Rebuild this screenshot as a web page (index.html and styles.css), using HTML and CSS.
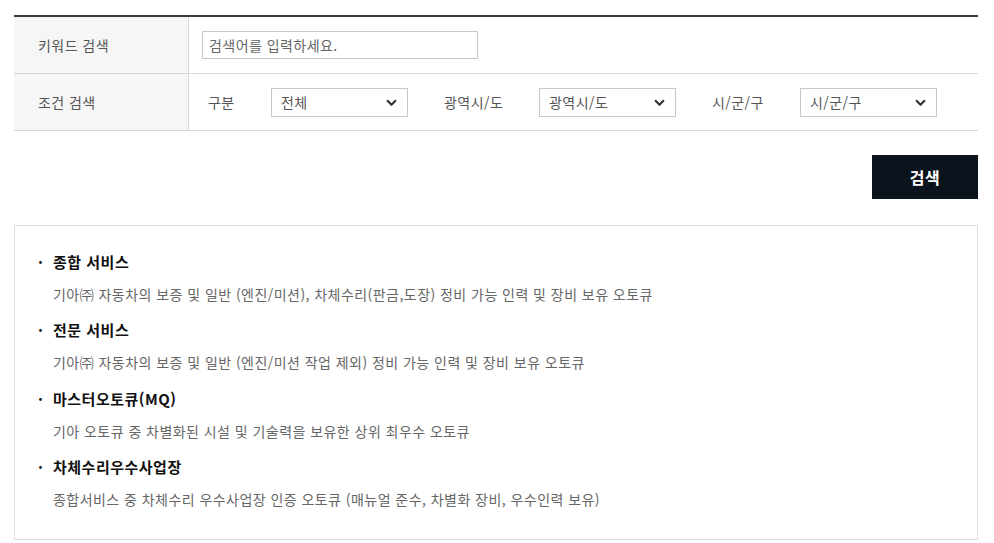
FILE: index.html
```html
<!DOCTYPE html>
<html lang="ko">
<head>
  <meta charset="UTF-8">
  <meta name="viewport" content="width=device-width, initial-scale=1.0">
  <title>오토큐 검색</title>
  <link rel="stylesheet" href="styles.css">
</head>
<body>
  <!-- Search form -->
  <div class="search-table">
    <div class="row">
      <div class="label">키워드 검색</div>
      <div class="field">
        <input type="text" class="keyword" placeholder="검색어를 입력하세요.">
      </div>
    </div>
    <div class="row">
      <div class="label">조건 검색</div>
      <div class="field conditions">
        <span class="cond-label">구분</span>
        <div class="select"><span>전체</span><svg viewBox="0 0 10 6"><path d="M1 1l4 4 4-4" /></svg></div>
        <span class="cond-label sido">광역시/도</span>
        <div class="select"><span>광역시/도</span><svg viewBox="0 0 10 6"><path d="M1 1l4 4 4-4" /></svg></div>
        <span class="cond-label sigungu">시/군/구</span>
        <div class="select"><span>시/군/구</span><svg viewBox="0 0 10 6"><path d="M1 1l4 4 4-4" /></svg></div>
      </div>
    </div>
  </div>

  <div class="actions">
    <button class="btn-search">검색</button>
  </div>

  <!-- Service descriptions -->
  <div class="info-box">
    <dl>
      <dt>종합 서비스</dt>
      <dd>기아㈜ 자동차의 보증 및 일반 (엔진/미션), 차체수리(판금,도장) 정비 가능 인력 및 장비 보유 오토큐</dd>
      <dt>전문 서비스</dt>
      <dd>기아㈜ 자동차의 보증 및 일반 (엔진/미션 작업 제외) 정비 가능 인력 및 장비 보유 오토큐</dd>
      <dt>마스터오토큐(MQ)</dt>
      <dd>기아 오토큐 중 차별화된 시설 및 기술력을 보유한 상위 최우수 오토큐</dd>
      <dt>차체수리우수사업장</dt>
      <dd>종합서비스 중 차체수리 우수사업장 인증 오토큐 (매뉴얼 준수, 차별화 장비, 우수인력 보유)</dd>
    </dl>
  </div>
</body>
</html>
```

FILE: styles.css
```css
/* General styles */
body {
  margin: 0;
  padding: 15px 16px 0 14px;
  font-family: "Noto Sans CJK KR", "Noto Sans", sans-serif;
  font-size: 14px;
  letter-spacing: 0.45px;
  color: #555;
  background: #fff;
}

/* Search table */
.search-table {
  border-top: 2px solid #3a3a3a;
}

.row {
  display: flex;
  height: 56px;
  border-bottom: 1px solid #d8d8d8;
}

.label {
  width: 150px;
  padding-left: 24px;
  background: #f6f6f6;
  border-right: 1px solid #d8d8d8;
  display: flex;
  align-items: center;
  color: #555;
}

.field {
  flex: 1;
  display: flex;
  align-items: center;
  padding-left: 13px;
}

.keyword {
  width: 262px;
  height: 26px;
  border: 1px solid #c8c8c8;
  padding: 0 6px;
  font-family: inherit;
  font-size: 14px;
  letter-spacing: 0.45px;
  color: #555;
  outline: none;
}

.keyword::placeholder {
  color: #666;
}

.conditions {
  padding-left: 19px;
}

.cond-label {
  width: 63px;
  color: #555;
}

.cond-label.sido {
  width: 95px;
  margin-left: 36px;
}

.cond-label.sigungu {
  width: 88px;
  margin-left: 36px;
}

.select {
  width: 137px;
  height: 29px;
  box-sizing: border-box;
  border: 1px solid #c8c8c8;
  display: flex;
  align-items: center;
  justify-content: space-between;
  padding: 0 10px 0 9px;
  color: #555;
}

.select svg {
  width: 11px;
  height: 7px;
  fill: none;
  stroke: #333;
  stroke-width: 2;
}

/* Button */
.actions {
  display: flex;
  justify-content: flex-end;
  padding-top: 24px;
}

.btn-search {
  width: 106px;
  height: 44px;
  background: #0b141c;
  color: #fff;
  border: none;
  font-family: inherit;
  font-size: 16px;
  font-weight: bold;
  letter-spacing: 0.5px;
  cursor: pointer;
}

/* Info box */
.info-box {
  margin-top: 26px;
  border: 1px solid #dcdcdc;
  padding: 24px 24px 24px 23px;
  height: 315px;
  box-sizing: border-box;
}

dl {
  margin: 0;
}

dt {
  font-weight: bold;
  color: #111;
  font-size: 15px;
  letter-spacing: 0.5px;
  line-height: 24px;
  position: relative;
  padding-left: 15px;
}

dt::before {
  content: "·";
  position: absolute;
  left: 0;
  font-weight: bold;
}

dd {
  margin: 8px 0 12.3px 15px;
  line-height: 24px;
  color: #666;
}
```
